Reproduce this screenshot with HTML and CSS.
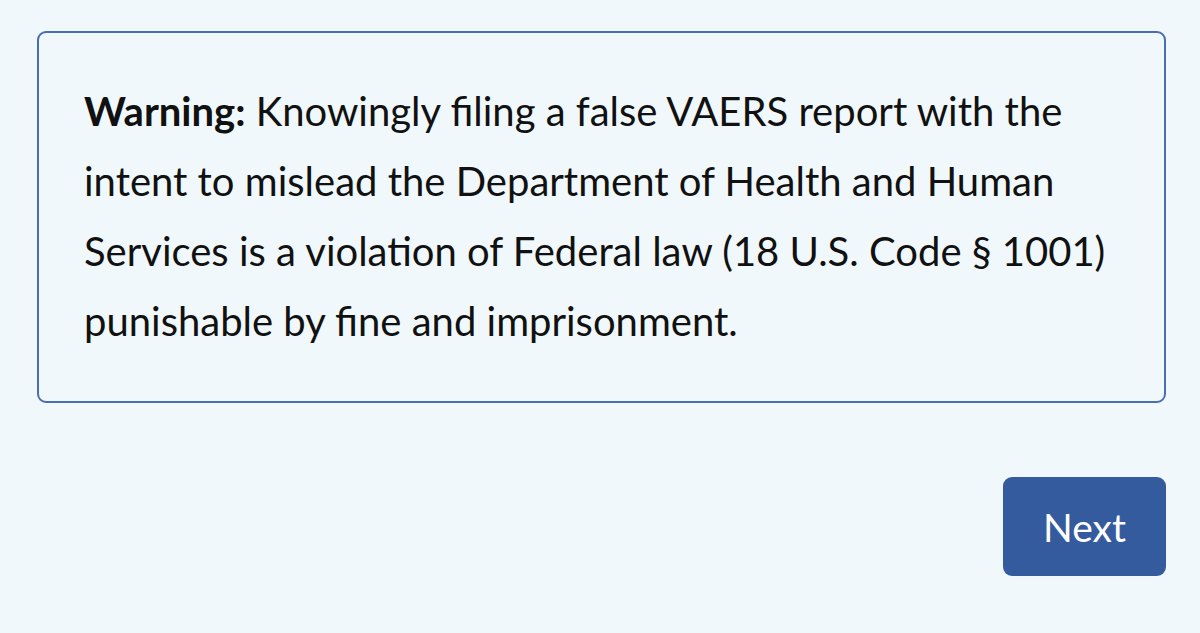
FILE: index.html
```html
<!DOCTYPE html>
<html lang="en">
<head>
<meta charset="utf-8">
<title>VAERS Warning</title>
<link rel="stylesheet" href="styles.css">
</head>
<body>
<main class="page">
  <section class="warning-box">
    <p class="warning-text"><strong>Warning:</strong> Knowingly filing a false VAERS report with the intent to mislead the Department of Health and Human Services is a violation of Federal law (18 U.S. Code § 1001) punishable by fine and imprisonment.</p>
  </section>
  <div class="actions">
    <button class="next-btn" type="button">Next</button>
  </div>
</main>
</body>
</html>
```
FILE: styles.css
```css
html, body {
  margin: 0;
  padding: 0;
  background: #f0f8fc;
}
body {
  font-family: Lato, "Open Sans", "Liberation Sans", sans-serif;
  color: #111;
}
.page {
  padding: 31px 34px 0 37px;
  display: flex;
  flex-direction: column;
}
.warning-box {
  border: 2px solid #4a6db3;
  border-radius: 9px;
  padding: 43px 45px 45px 45px;
}
.warning-text {
  margin: 0;
  font-size: 40px;
  line-height: 70px;
}
.warning-text strong {
  font-weight: 700;
}
.actions {
  display: flex;
  justify-content: flex-end;
  margin-top: 74px;
}
.next-btn {
  width: 163px;
  height: 99px;
  border: none;
  border-radius: 9px;
  background: #355b9f;
  color: #fff;
  font-family: Lato, "Open Sans", "Liberation Sans", sans-serif;
  font-size: 39px;
  cursor: pointer;
}
```
